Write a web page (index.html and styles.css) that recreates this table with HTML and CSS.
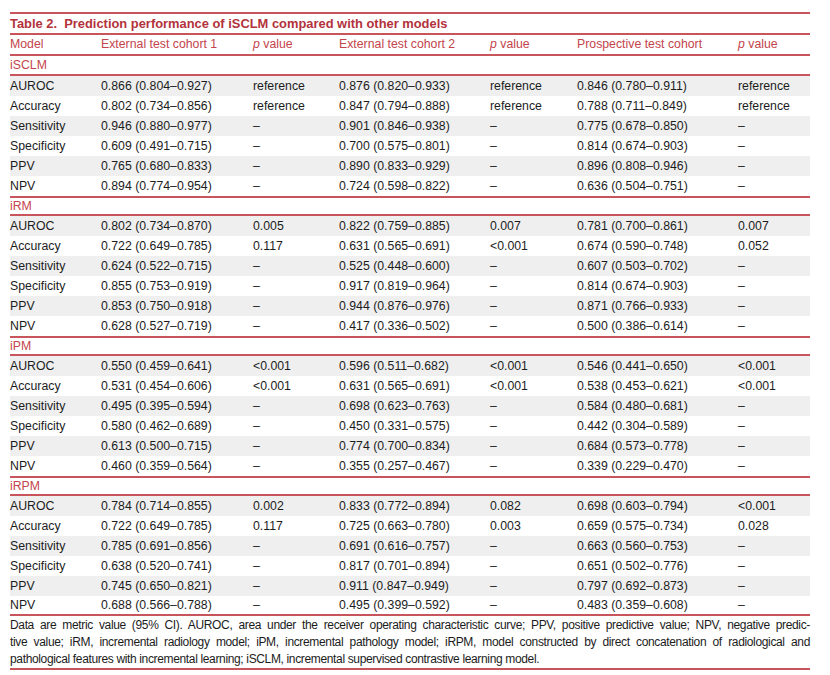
FILE: index.html
```html
<!DOCTYPE html>
<html>
<head>
<meta charset="utf-8">
<link rel="stylesheet" href="styles.css">
</head>
<body>
<div class="tbl">
  <div class="title">Table 2.&nbsp; Prediction performance of iSCLM compared with other models</div>
  <div class="row head">
    <div>Model</div><div>External test cohort 1</div><div><i>p</i> value</div><div>External test cohort 2</div><div><i>p</i> value</div><div>Prospective test cohort</div><div><i>p</i> value</div>
  </div>

  <div class="group first">iSCLM</div>
  <div class="row g"><div>AUROC</div><div>0.866 (0.804–0.927)</div><div>reference</div><div>0.876 (0.820–0.933)</div><div>reference</div><div>0.846 (0.780–0.911)</div><div>reference</div></div>
  <div class="row"><div>Accuracy</div><div>0.802 (0.734–0.856)</div><div>reference</div><div>0.847 (0.794–0.888)</div><div>reference</div><div>0.788 (0.711–0.849)</div><div>reference</div></div>
  <div class="row g"><div>Sensitivity</div><div>0.946 (0.880–0.977)</div><div>–</div><div>0.901 (0.846–0.938)</div><div>–</div><div>0.775 (0.678–0.850)</div><div>–</div></div>
  <div class="row"><div>Specificity</div><div>0.609 (0.491–0.715)</div><div>–</div><div>0.700 (0.575–0.801)</div><div>–</div><div>0.814 (0.674–0.903)</div><div>–</div></div>
  <div class="row g"><div>PPV</div><div>0.765 (0.680–0.833)</div><div>–</div><div>0.890 (0.833–0.929)</div><div>–</div><div>0.896 (0.808–0.946)</div><div>–</div></div>
  <div class="row"><div>NPV</div><div>0.894 (0.774–0.954)</div><div>–</div><div>0.724 (0.598–0.822)</div><div>–</div><div>0.636 (0.504–0.751)</div><div>–</div></div>

  <div class="group">iRM</div>
  <div class="row g"><div>AUROC</div><div>0.802 (0.734–0.870)</div><div>0.005</div><div>0.822 (0.759–0.885)</div><div>0.007</div><div>0.781 (0.700–0.861)</div><div>0.007</div></div>
  <div class="row"><div>Accuracy</div><div>0.722 (0.649–0.785)</div><div>0.117</div><div>0.631 (0.565–0.691)</div><div>&lt;0.001</div><div>0.674 (0.590–0.748)</div><div>0.052</div></div>
  <div class="row g"><div>Sensitivity</div><div>0.624 (0.522–0.715)</div><div>–</div><div>0.525 (0.448–0.600)</div><div>–</div><div>0.607 (0.503–0.702)</div><div>–</div></div>
  <div class="row"><div>Specificity</div><div>0.855 (0.753–0.919)</div><div>–</div><div>0.917 (0.819–0.964)</div><div>–</div><div>0.814 (0.674–0.903)</div><div>–</div></div>
  <div class="row g"><div>PPV</div><div>0.853 (0.750–0.918)</div><div>–</div><div>0.944 (0.876–0.976)</div><div>–</div><div>0.871 (0.766–0.933)</div><div>–</div></div>
  <div class="row"><div>NPV</div><div>0.628 (0.527–0.719)</div><div>–</div><div>0.417 (0.336–0.502)</div><div>–</div><div>0.500 (0.386–0.614)</div><div>–</div></div>

  <div class="group">iPM</div>
  <div class="row g"><div>AUROC</div><div>0.550 (0.459–0.641)</div><div>&lt;0.001</div><div>0.596 (0.511–0.682)</div><div>&lt;0.001</div><div>0.546 (0.441–0.650)</div><div>&lt;0.001</div></div>
  <div class="row"><div>Accuracy</div><div>0.531 (0.454–0.606)</div><div>&lt;0.001</div><div>0.631 (0.565–0.691)</div><div>&lt;0.001</div><div>0.538 (0.453–0.621)</div><div>&lt;0.001</div></div>
  <div class="row g"><div>Sensitivity</div><div>0.495 (0.395–0.594)</div><div>–</div><div>0.698 (0.623–0.763)</div><div>–</div><div>0.584 (0.480–0.681)</div><div>–</div></div>
  <div class="row"><div>Specificity</div><div>0.580 (0.462–0.689)</div><div>–</div><div>0.450 (0.331–0.575)</div><div>–</div><div>0.442 (0.304–0.589)</div><div>–</div></div>
  <div class="row g"><div>PPV</div><div>0.613 (0.500–0.715)</div><div>–</div><div>0.774 (0.700–0.834)</div><div>–</div><div>0.684 (0.573–0.778)</div><div>–</div></div>
  <div class="row"><div>NPV</div><div>0.460 (0.359–0.564)</div><div>–</div><div>0.355 (0.257–0.467)</div><div>–</div><div>0.339 (0.229–0.470)</div><div>–</div></div>

  <div class="group">iRPM</div>
  <div class="row g"><div>AUROC</div><div>0.784 (0.714–0.855)</div><div>0.002</div><div>0.833 (0.772–0.894)</div><div>0.082</div><div>0.698 (0.603–0.794)</div><div>&lt;0.001</div></div>
  <div class="row"><div>Accuracy</div><div>0.722 (0.649–0.785)</div><div>0.117</div><div>0.725 (0.663–0.780)</div><div>0.003</div><div>0.659 (0.575–0.734)</div><div>0.028</div></div>
  <div class="row g"><div>Sensitivity</div><div>0.785 (0.691–0.856)</div><div>–</div><div>0.691 (0.616–0.757)</div><div>–</div><div>0.663 (0.560–0.753)</div><div>–</div></div>
  <div class="row"><div>Specificity</div><div>0.638 (0.520–0.741)</div><div>–</div><div>0.817 (0.701–0.894)</div><div>–</div><div>0.651 (0.502–0.776)</div><div>–</div></div>
  <div class="row g"><div>PPV</div><div>0.745 (0.650–0.821)</div><div>–</div><div>0.911 (0.847–0.949)</div><div>–</div><div>0.797 (0.692–0.873)</div><div>–</div></div>
  <div class="row last"><div>NPV</div><div>0.688 (0.566–0.788)</div><div>–</div><div>0.495 (0.399–0.592)</div><div>–</div><div>0.483 (0.359–0.608)</div><div>–</div></div>

  <div class="foot">
    <span class="jl">Data are metric value (95% CI). AUROC, area under the receiver operating characteristic curve; PPV, positive predictive value; NPV, negative predic-</span>
    <span class="jl">tive value; iRM, incremental radiology model; iPM, incremental pathology model; iRPM, model constructed by direct concatenation of radiological and</span>
    <span class="ll">pathological features with incremental learning; iSCLM, incremental supervised contrastive learning model.</span>
  </div>
</div>
</body>
</html>
```

FILE: styles.css
```css
html, body {
  margin: 0;
  padding: 0;
  background: #ffffff;
}
body {
  padding: 12px 20px 0 10px;
  font-family: "Liberation Sans", Arial, sans-serif;
  font-size: 12.3px;
  color: #1c1c1c;
}
.tbl {
  width: 800px;
  border-top: 2px solid #c9555c;
  border-bottom: 2px solid #c9555c;
}
.title {
  height: 19px;
  line-height: 19px;
  font-size: 12.9px;
  font-weight: bold;
  color: #b3323c;
  border-bottom: 2px solid #c9555c;
  white-space: pre;
}
.row {
  display: grid;
  grid-template-columns: 91px 152px 86px 151px 87px 161px 72px;
  height: 20px;
  line-height: 20px;
  white-space: nowrap;
}
.row.head {
  height: 19px;
  line-height: 19px;
  color: #c4444c;
  border-bottom: 2px solid #c9555c;
}
.row.g {
  background: #efefef;
}
.row.last {
  height: 18px;
  line-height: 18px;
}
.group {
  height: 16px;
  line-height: 16px;
  color: #c4444c;
  border-top: 2px solid #c9555c;
  border-bottom: 2px solid #c9555c;
}
.group.first {
  border-top: none;
  height: 18px;
  line-height: 18px;
}
.foot {
  border-top: 2px solid #c9555c;
  padding: 1px 0 0;
  line-height: 17px;
  font-size: 12px;
  letter-spacing: -0.35px;
}
.foot span {
  display: block;
  white-space: nowrap;
}
.foot .jl {
  text-align: justify;
  text-align-last: justify;
}
.foot .ll {
  text-align: left;
}
```
